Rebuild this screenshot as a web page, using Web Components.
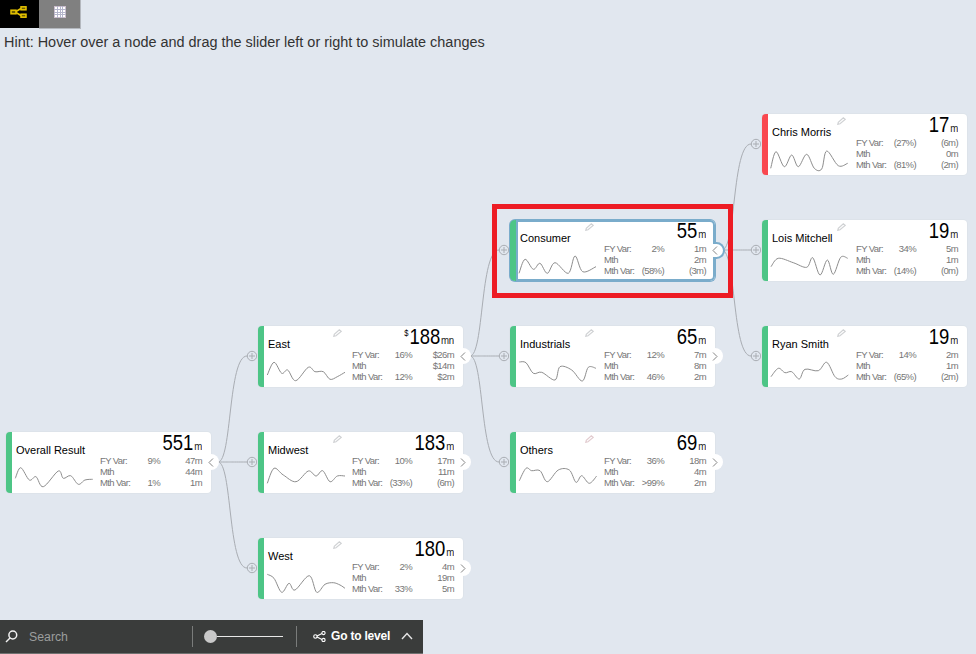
<!DOCTYPE html>
<html>
<head>
<meta charset="utf-8">
<style>
  html, body { margin: 0; height: 654px; overflow: hidden; }
  body { background: #e1e7ef; font-family: "Liberation Sans", Arial, sans-serif; display: flex; flex-direction: column; }
</style>
</head>
<body>
<view-switch></view-switch>
<hint-line>Hint: Hover over a node and drag the slider left or right to simulate changes</hint-line>
<tree-canvas>
  <tree-links></tree-links>

  <tree-node x="6" y="376" value="551" tab="open" nopencil spark="9.3,46.3 14.7,35.7 23.3,48 30,44.7 37.3,54.7 52.3,39 57.3,46.3 64.7,43.7 72.3,52.3 79,48 86.7,47.3">
    Overall Result
    <stat-row slot="stats" label="FY Var:" pct="9%" val="47m"></stat-row>
    <stat-row slot="stats" label="Mth" val="44m"></stat-row>
    <stat-row slot="stats" label="Mth Var:" pct="1%" val="1m"></stat-row>
  </tree-node>

  <tree-node x="258" y="270" value="188" prefix="$" unit="mn" tab="open" spark="9.3,49 16,36.3 23.7,47.3 29.7,44 37.7,54.7 50.3,41.3 57,45.7 65.3,45.7 72,53.3 79.3,50.7 87,46.3">
    East
    <stat-row slot="stats" label="FY Var:" pct="16%" val="$26m"></stat-row>
    <stat-row slot="stats" label="Mth" val="$14m"></stat-row>
    <stat-row slot="stats" label="Mth Var:" pct="12%" val="$2m"></stat-row>
  </tree-node>

  <tree-node x="258" y="376" value="183" tab="closed" spark="9.3,51.3 16,36.3 25.3,43 38,49.7 50.3,39 58,44 64.7,38.7 72,49.7 79.3,44 87,44">
    Midwest
    <stat-row slot="stats" label="FY Var:" pct="10%" val="17m"></stat-row>
    <stat-row slot="stats" label="Mth" val="11m"></stat-row>
    <stat-row slot="stats" label="Mth Var:" pct="(33%)" val="(6m)"></stat-row>
  </tree-node>

  <tree-node x="258" y="482" value="180" tab="closed" spark="9.3,36.3 16,40.3 23.7,54.3 31,45.3 37,52 51.3,37.7 58.7,54.3 67,46.3 75.3,44.7 82,47 87,50.3">
    West
    <stat-row slot="stats" label="FY Var:" pct="2%" val="4m"></stat-row>
    <stat-row slot="stats" label="Mth" val="19m"></stat-row>
    <stat-row slot="stats" label="Mth Var:" pct="33%" val="5m"></stat-row>
  </tree-node>

  <tree-node x="510" y="164" value="55" tab="open" selected spark="9,53.3 15,39.3 23.3,49.3 30,43.3 37.3,53.3 45,42.7 58.3,53.3 65,36 72.7,51.7 86,46.7">
    Consumer
    <stat-row slot="stats" label="FY Var:" pct="2%" val="1m"></stat-row>
    <stat-row slot="stats" label="Mth" val="2m"></stat-row>
    <stat-row slot="stats" label="Mth Var:" pct="(58%)" val="(3m)"></stat-row>
  </tree-node>

  <tree-node x="510" y="270" value="65" tab="closed" spark="9.3,36 16,36.7 23.3,47.3 31.7,46.3 45,54 50,40.7 61.7,44 72.3,55 78.3,41.3 86,42.3">
    Industrials
    <stat-row slot="stats" label="FY Var:" pct="12%" val="7m"></stat-row>
    <stat-row slot="stats" label="Mth" val="8m"></stat-row>
    <stat-row slot="stats" label="Mth Var:" pct="46%" val="2m"></stat-row>
  </tree-node>

  <tree-node x="510" y="376" value="69" tab="closed" pencil-color="#e2ccd0" spark="9.3,48.7 16,36.3 21.7,38.7 30,38.7 37.3,49.7 48.3,38 59.3,38 66,50.3 71.7,43.7 79.3,51.3 86.7,44">
    Others
    <stat-row slot="stats" label="FY Var:" pct="36%" val="18m"></stat-row>
    <stat-row slot="stats" label="Mth" val="4m"></stat-row>
    <stat-row slot="stats" label="Mth Var:" pct="&gt;99%" val="2m"></stat-row>
  </tree-node>

  <tree-node x="762" y="58" value="17" flag="red" spark="8.7,54.3 14,37.7 22.3,52.7 29.7,41 36.3,52.7 44.7,40.3 52.3,54.3 59.7,55 64.7,37 76.3,51.7 85.7,49.3">
    Chris Morris
    <stat-row slot="stats" label="FY Var:" pct="(27%)" val="(6m)"></stat-row>
    <stat-row slot="stats" label="Mth" val="0m"></stat-row>
    <stat-row slot="stats" label="Mth Var:" pct="(81%)" val="(2m)"></stat-row>
  </tree-node>

  <tree-node x="762" y="164" value="19" spark="9,46.7 16.3,38.3 31.3,42.7 44.7,47.3 50.7,37.7 58,55 65.3,40 71.3,54.3 78.7,37.3 85.7,38.3">
    Lois Mitchell
    <stat-row slot="stats" label="FY Var:" pct="34%" val="5m"></stat-row>
    <stat-row slot="stats" label="Mth" val="1m"></stat-row>
    <stat-row slot="stats" label="Mth Var:" pct="(14%)" val="(0m)"></stat-row>
  </tree-node>

  <tree-node x="762" y="270" value="19" spark="9,50.7 16.3,42.3 23,46.7 29.7,45.7 37.3,53 43,43.3 56.3,44.7 64.7,36.3 73,50.7 79.7,53 86.3,49">
    Ryan Smith
    <stat-row slot="stats" label="FY Var:" pct="14%" val="2m"></stat-row>
    <stat-row slot="stats" label="Mth" val="1m"></stat-row>
    <stat-row slot="stats" label="Mth Var:" pct="(65%)" val="(2m)"></stat-row>
  </tree-node>

  <focus-box></focus-box>
</tree-canvas>
<bottom-bar></bottom-bar>

<script>
class ViewSwitch extends HTMLElement {
  constructor() {
    super();
    this.attachShadow({ mode: "open" });
    this.shadowRoot.innerHTML = `
      <style>
        :host { display: flex; height: 28px; flex: none; }
        .btn { display: flex; align-items: center; justify-content: center; height: 28px; box-sizing: border-box; padding-bottom: 5px; }
        .tree { width: 39px; background: #000; padding-right: 3px; }
        .table { width: 42px; background: #808080; border-right: 1px solid #b4b8be; box-shadow: 0 1px 0 #b4b8be; }
      </style>
      <div class="btn tree">
        <svg width="17" height="12" viewBox="0 0 17 12" fill="none" stroke="#e6c300" stroke-width="1.5">
          <rect x="1" y="4.2" width="5" height="3.6" fill="#6f5f00"/>
          <rect x="11" y=".8" width="5" height="3" fill="#6f5f00"/>
          <rect x="11" y="8.2" width="5" height="3" fill="#6f5f00"/>
          <path d="M6 5.5 11 2.5M6 6.5 11 9.5"/>
        </svg>
      </div>
      <div class="btn table">
        <svg width="12" height="12" viewBox="0 0 12 12">
          <rect width="12" height="12" fill="#fff"/>
          <path d="M0 .5H12M0 11.5H12M.5 0V12M11.5 0V12" stroke="#cbbccb" fill="none"/>
          <path d="M0 3.5H12M0 6.5H12M0 8.5H12M3.5 0V12M6.5 0V12M8.5 0V12" stroke="#b5b6cb" fill="none"/>
        </svg>
      </div>
    `;
  }
}

class HintLine extends HTMLElement {
  constructor() {
    super();
    this.attachShadow({ mode: "open" });
    this.shadowRoot.innerHTML = `
      <style>
        :host { display: block; height: 28px; flex: none; padding-left: 4px; font-size: 14.45px; line-height: 28px; color: #333; white-space: nowrap; }
      </style>
      <slot></slot>
    `;
  }
}

class TreeCanvas extends HTMLElement {
  constructor() {
    super();
    this.attachShadow({ mode: "open" });
    this.shadowRoot.innerHTML = `
      <style>
        :host { display: block; position: relative; flex: 1; min-height: 0; }
      </style>
      <slot></slot>
    `;
  }
}

// parent tab position and the plus circles it feeds, in canvas coordinates
const LINKS = [
  { x: 212, y: 406, kids: [[252, 300], [252, 406], [252, 512]] },
  { x: 464, y: 300, kids: [[504, 194], [504, 300], [504, 406]] },
  { x: 716, y: 194, kids: [[756, 88], [756, 194], [756, 300]] }
];

class TreeLinks extends HTMLElement {
  constructor() {
    super();
    this.attachShadow({ mode: "open" });
    let body = "";
    LINKS.forEach(group => {
      const x0 = group.x + 6;
      group.kids.forEach(([cx, cy]) => {
        body += `<path d="M${x0} ${group.y}C${x0 + 14} ${group.y} ${x0 + 10} ${cy} ${cx - 5} ${cy}"/>`;
        body += `<circle cx="${cx}" cy="${cy}" r="4.7"/>`;
        body += `<path d="M${cx - 3} ${cy}H${cx + 3}M${cx} ${cy - 3}V${cy + 3}"/>`;
      });
    });
    this.shadowRoot.innerHTML = `
      <style>
        :host { position: absolute; inset: 0; display: block; }
        svg { display: block; }
      </style>
      <svg width="976" height="564" fill="none" stroke="#a9adb3" stroke-width="1">${body}</svg>
    `;
  }
}

class StatRow extends HTMLElement {
  connectedCallback() {
    if (this.shadowRoot) return;
    this.attachShadow({ mode: "open" });
    this.shadowRoot.innerHTML = `
      <style>
        :host { display: grid; grid-template-columns: 34px 26px 42px; height: 11px; line-height: 11px; font-size: 9.5px; letter-spacing: -0.6px; color: #767676; white-space: nowrap; }
        .num { text-align: right; }
      </style>
      <span>${this.getAttribute("label")}</span>
      <span class="num">${(this.getAttribute("pct") || "").replace(">", "&gt;")}</span>
      <span class="num">${this.getAttribute("val")}</span>
    `;
  }
}

function smoothPath(points) {
  const p = points.trim().split(/\s+/).map(s => s.split(",").map(Number));
  let d = `M${p[0][0]} ${p[0][1]}`;
  for (let i = 0; i < p.length - 1; i++) {
    const a = p[i - 1] || p[i], b = p[i], c = p[i + 1], e = p[i + 2] || c;
    const c1x = b[0] + (c[0] - a[0]) / 6, c1y = b[1] + (c[1] - a[1]) / 6;
    const c2x = c[0] - (e[0] - b[0]) / 6, c2y = c[1] - (e[1] - b[1]) / 6;
    d += `C${c1x.toFixed(1)} ${c1y.toFixed(1)} ${c2x.toFixed(1)} ${c2y.toFixed(1)} ${c[0]} ${c[1]}`;
  }
  return d;
}

class TreeNode extends HTMLElement {
  connectedCallback() {
    if (this.shadowRoot) return;
    this.style.left = this.getAttribute("x") + "px";
    this.style.top = this.getAttribute("y") + "px";
    const tab = this.getAttribute("tab");
    const chevron = tab === "open" ? "M5 .5 1 4.5 5 8.5" : "M1 .5 5 4.5 1 8.5";
    const selected = this.hasAttribute("selected");
    const prefix = this.getAttribute("prefix");
    const pencilColor = this.getAttribute("pencil-color") || "#d0d2d4";
    this.attachShadow({ mode: "open" });
    this.shadowRoot.innerHTML = `
      <style>
        :host { position: absolute; display: block; width: 205px; height: 61px; }
        .card { box-sizing: border-box; height: 100%; display: grid; grid-template-columns: 88px 102px; padding-right: 9px; background: #fff; border-left: 6px solid #4dc586; border-radius: 4px; box-shadow: 0 0 0 1px #dde3ea; }
        :host([flag="red"]) .card { border-left-color: #f9484f; }
        :host([selected]) .card { border-radius: 5px; box-shadow: 0 0 0 1px #7aaccb, inset 0 0 0 2px #7aaccb; }
        .left { padding: 12px 0 0 4px; min-width: 0; }
        .name { font-size: 11px; line-height: 13px; color: #000; white-space: nowrap; }
        svg.spark { display: block; margin-top: 7px; overflow: visible; }
        .value { height: 23px; line-height: 22px; font-size: 22px; color: #000; text-align: right; white-space: nowrap; transform: scaleX(.84); transform-origin: right center; }
        .value small { font-size: 11.5px; letter-spacing: -0.3px; margin-left: 1px; color: #222; }
        .value sup { font-size: 9px; line-height: 0; vertical-align: 8px; margin-right: 1px; }
        .pencil { position: absolute; left: 75px; top: 3px; }
        .tab { position: absolute; left: 202px; top: 22px; width: 11px; height: 16px; box-sizing: border-box; background: #fff; border-radius: 0 8px 8px 0; }
        :host([selected]) .tab { left: 203px; top: 22px; width: 12px; height: 17px; border: 2px solid #7aaccb; border-left: none; border-radius: 0 9px 9px 0; }
        .tab svg { position: absolute; left: 0; top: 3.5px; }
        :host([selected]) .tab svg { top: 2px; left: -1px; }
      </style>
      <div class="card">
        <div class="left">
          <div class="name"><slot></slot></div>
          <svg class="spark" width="80" height="26" viewBox="10 32 80 26" fill="none" stroke="#8d8d8d" stroke-width="1">
            <path d="${smoothPath(this.getAttribute("spark"))}"/>
          </svg>
        </div>
        <div class="right">
          <div class="value">${prefix ? `<sup>${prefix}</sup>` : ""}${this.getAttribute("value")}<small>${this.getAttribute("unit") || "m"}</small></div>
          <slot name="stats"></slot>
        </div>
      </div>
      ${this.hasAttribute("nopencil") ? "" : `
      <svg class="pencil" width="9" height="8" viewBox="0 0 9 8" fill="none" stroke="${pencilColor}" stroke-width="1.2">
        <path d="M.8 7.3 1.3 5.2 6.3.8 8.2 2.4 3 6.8Z"/>
      </svg>`}
      ${tab ? `
      <div class="tab">
        <svg width="6" height="9" viewBox="0 0 6 9" fill="none" stroke="#858585" stroke-width="1"><path d="${chevron}"/></svg>
      </div>` : ""}
    `;
    if (selected) this.style.zIndex = 1;
  }
}

class FocusBox extends HTMLElement {
  constructor() {
    super();
    this.attachShadow({ mode: "open" });
    this.shadowRoot.innerHTML = `
      <style>
        :host { position: absolute; left: 492px; top: 148px; width: 241px; height: 94px; box-sizing: border-box; display: block; border: 5px solid #ed1c24; z-index: 2; }
      </style>
    `;
  }
}

class BottomBar extends HTMLElement {
  constructor() {
    super();
    this.attachShadow({ mode: "open" });
    this.shadowRoot.innerHTML = `
      <style>
        :host { display: flex; align-items: center; flex: none; width: 423px; height: 34px; box-sizing: border-box; background: #3a3c3b; border-bottom: 1px solid #6f7170; color: #fff; font-size: 12px; }
        .search { display: flex; align-items: center; width: 192px; box-sizing: border-box; padding-left: 5px; color: #9c9e9d; font-size: 12.3px; }
        .search svg { margin-right: 11px; }
        .rule { width: 1px; height: 21px; background: #7a7c7b; flex: none; }
        .slider { display: flex; align-items: center; width: 103px; box-sizing: border-box; padding-left: 11px; }
        .knob { width: 13px; height: 13px; border-radius: 50%; background: #c9c9c9; flex: none; }
        .track { width: 66px; height: 1px; background: #e8e8e8; flex: none; }
        .level { display: flex; align-items: center; padding-left: 16px; margin-top: -1px; font-weight: bold; letter-spacing: -0.2px; }
        .level .net { margin-right: 4px; }
        .level .up { margin-left: 11px; }
      </style>
      <div class="search">
        <svg width="13" height="13" viewBox="0 0 13 13" fill="none" stroke="#f2f2f2" stroke-width="1.5">
          <circle cx="7.8" cy="5" r="3.9"/><path d="M5 8 1 12"/>
        </svg>
        Search
      </div>
      <div class="rule"></div>
      <div class="slider"><div class="knob"></div><div class="track"></div></div>
      <div class="rule"></div>
      <div class="level">
        <svg class="net" width="14" height="11" viewBox="0 0 14 11" fill="none" stroke="#fff" stroke-width="1.1">
          <circle cx="2.4" cy="5.5" r="1.7"/><circle cx="10.5" cy="2" r="1.6"/><circle cx="10.5" cy="9" r="1.6"/>
          <path d="M4 5 9 2.4M4 6 9 8.6"/>
        </svg>
        Go to level
        <svg class="up" width="12" height="8" viewBox="0 0 12 8" fill="none" stroke="#e6e6e6" stroke-width="1.4"><path d="M1 7 6 1.5 11 7"/></svg>
      </div>
    `;
  }
}

customElements.define("view-switch", ViewSwitch);
customElements.define("hint-line", HintLine);
customElements.define("tree-canvas", TreeCanvas);
customElements.define("tree-links", TreeLinks);
customElements.define("stat-row", StatRow);
customElements.define("tree-node", TreeNode);
customElements.define("focus-box", FocusBox);
customElements.define("bottom-bar", BottomBar);
</script>
</body>
</html>
